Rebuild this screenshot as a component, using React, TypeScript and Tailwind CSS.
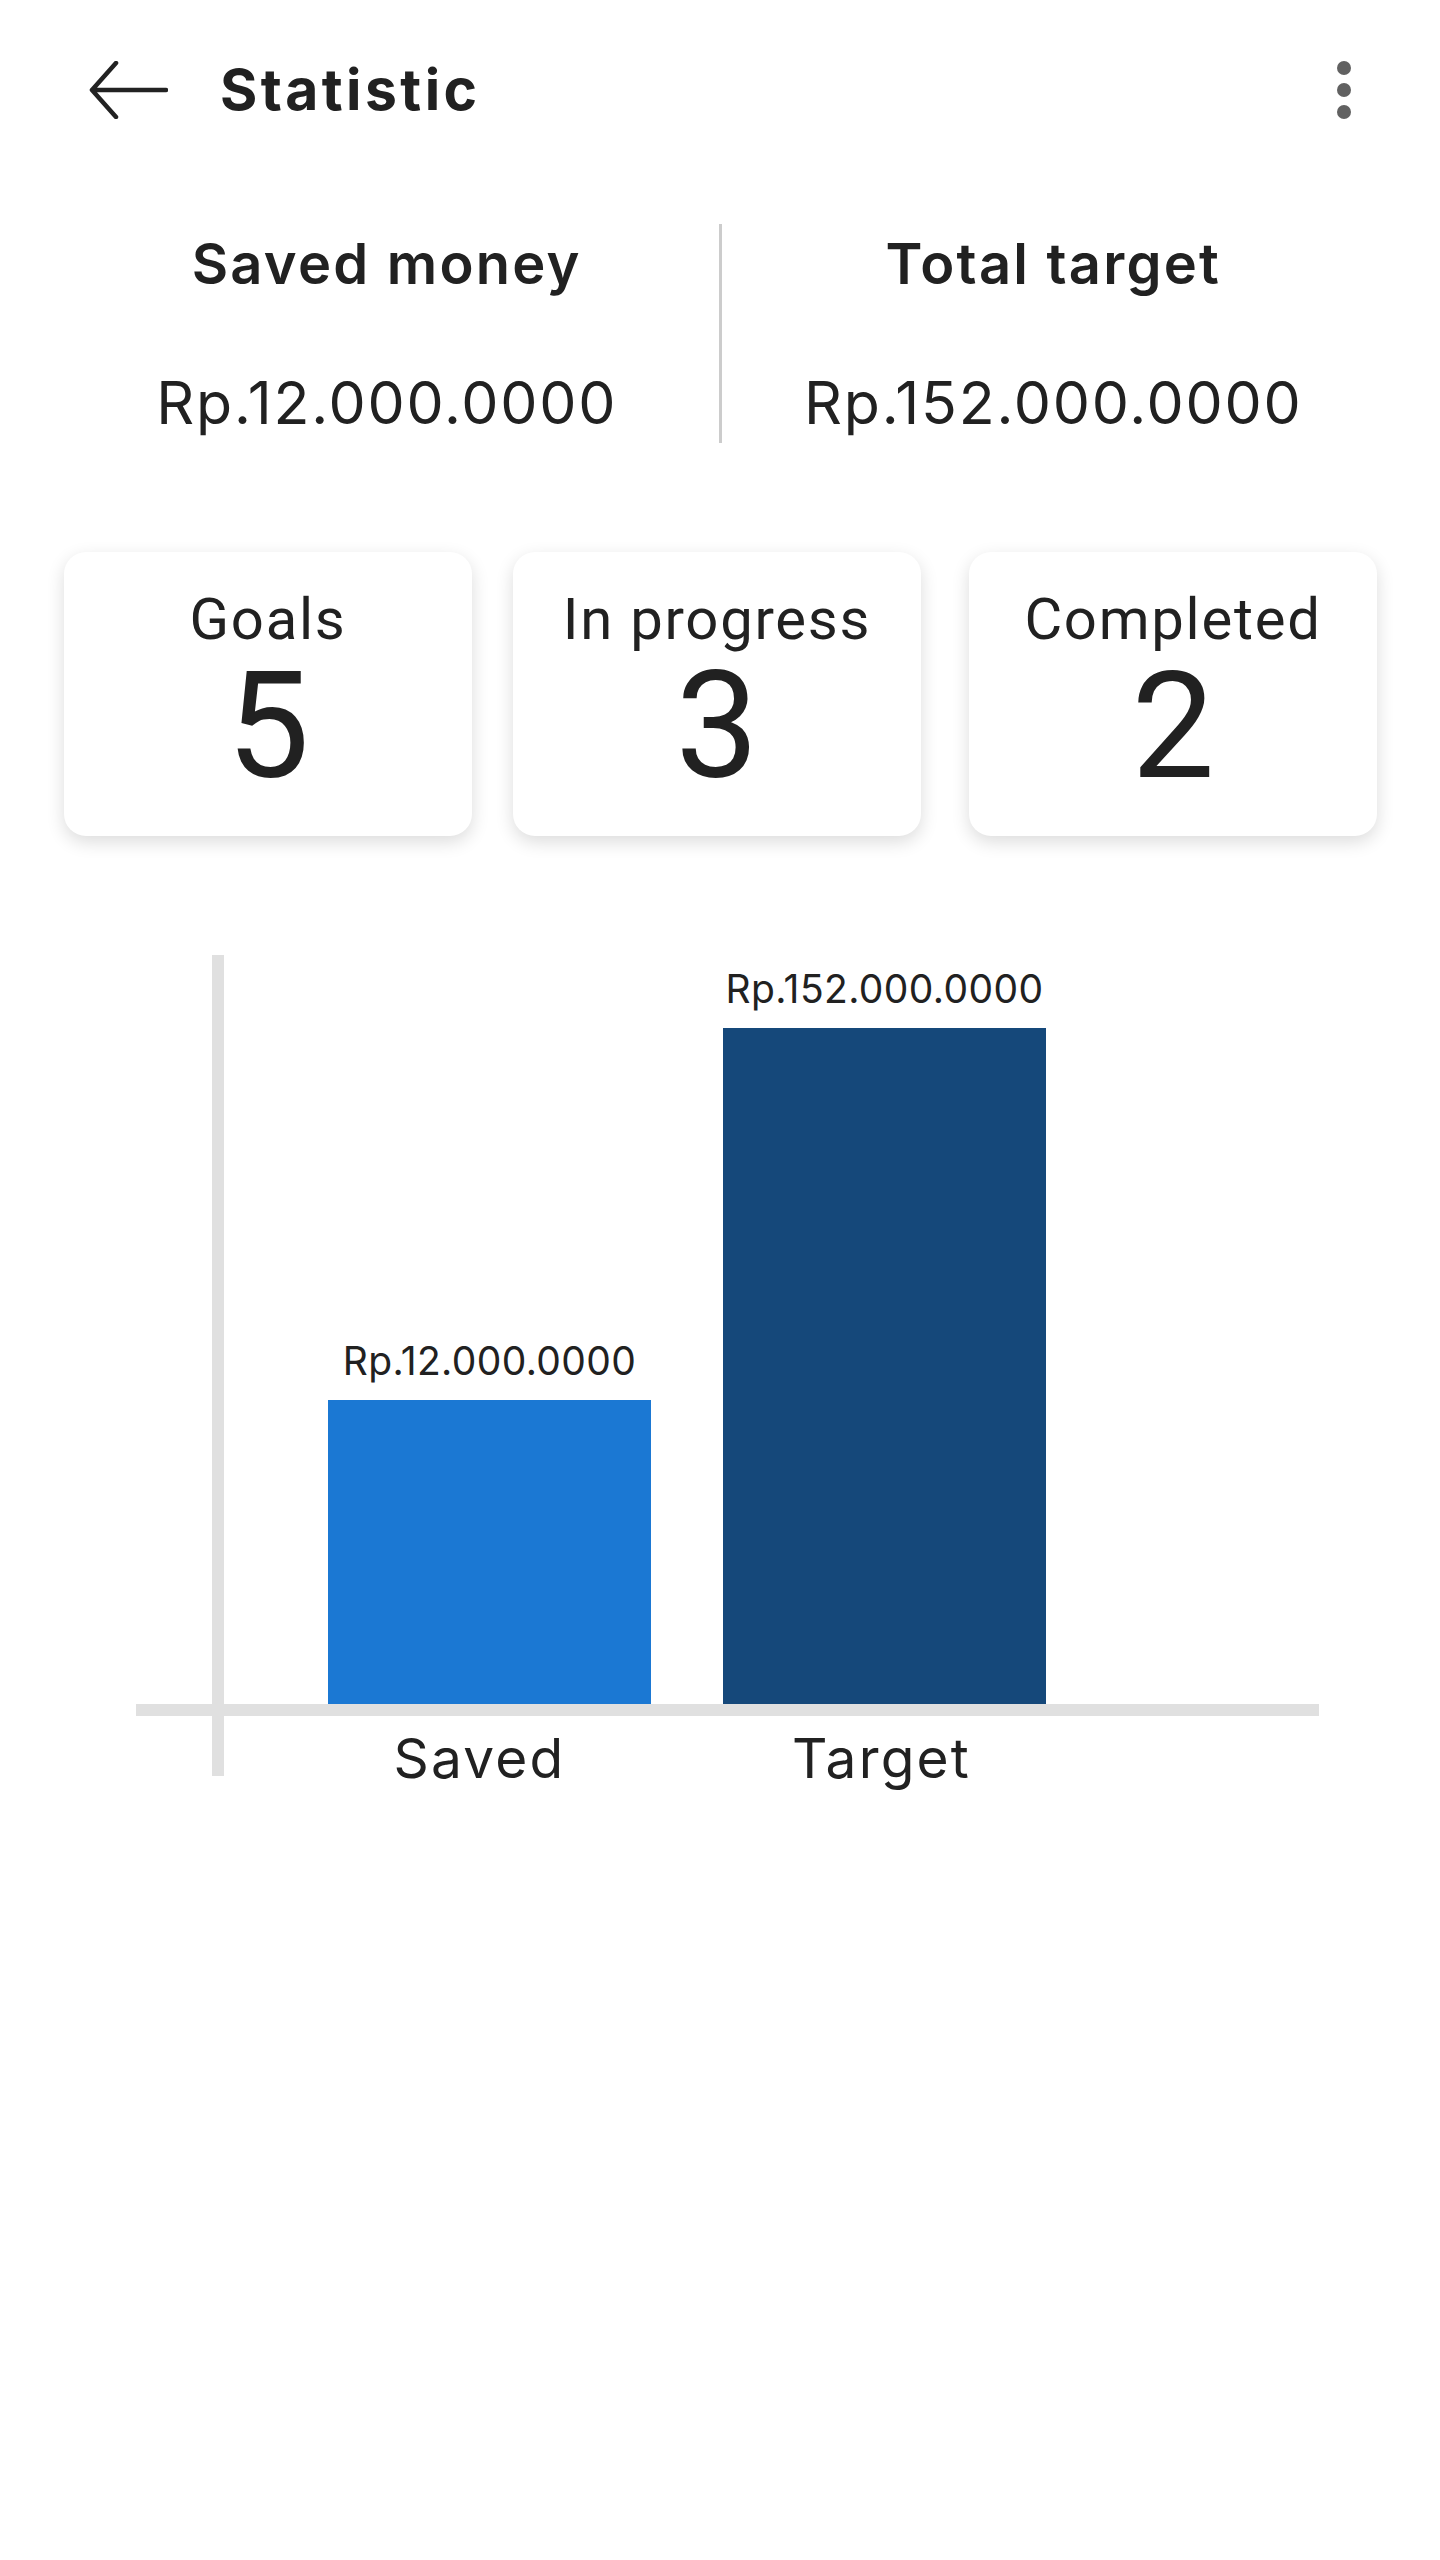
import React from 'react';

const poppins = { fontFamily: 'Inter, "Open Sans", sans-serif' };

const stats = [
  { label: 'Goals', value: 5, gap: 'ml-0' },
  { label: 'In progress', value: 3, gap: 'ml-[41px]' },
  { label: 'Completed', value: 2, gap: 'ml-[48px]' },
];

const bars = [
  { name: 'Saved', amount: 'Rp.12.000.0000', height: 304, color: 'bg-[#1b78d3]' },
  { name: 'Target', amount: 'Rp.152.000.0000', height: 676, color: 'bg-[#15487a]' },
];

const BackArrow = () => (
  <svg width="80" height="58" viewBox="0 0 80 58" fill="none">
    <path d="M78 29H4M4 29L28 2M4 29L28 56" stroke="#222" strokeWidth="4.5" strokeLinecap="round" strokeLinejoin="round" />
  </svg>
);

const App: React.FC = () => {
  return (
    <div className="w-[1440px] min-h-[2560px] bg-white text-[#212121] font-['Inter',sans-serif]">
      {/* Header */}
      <div className="h-[180px] flex items-center pl-[88px] pr-[89px]">
        <BackArrow />
        <h1 className="ml-[52px] text-[57px] font-bold tracking-[0.06em] flex-1">Statistic</h1>
        <div className="flex flex-col gap-[8px]">
          <span className="w-[14px] h-[14px] rounded-full bg-[#616161]" />
          <span className="w-[14px] h-[14px] rounded-full bg-[#616161]" />
          <span className="w-[14px] h-[14px] rounded-full bg-[#616161]" />
        </div>
      </div>

      {/* Summary */}
      <div className="mt-[44px] flex px-[55px] h-[219px]">
        <div className="flex-1 flex flex-col items-center pt-[8px]">
          <p className="text-[56px] font-semibold leading-[64px] tracking-[0.04em]">Saved money</p>
          <p className="mt-[74px] text-[59px] leading-[66px] tracking-[0.03em]">Rp.12.000.0000</p>
        </div>
        <div className="w-[3px] bg-[#cccccc]" />
        <div className="flex-1 flex flex-col items-center pt-[8px]">
          <p className="text-[56px] font-semibold leading-[64px] tracking-[0.04em]">Total target</p>
          <p className="mt-[74px] text-[59px] leading-[66px] tracking-[0.03em]">Rp.152.000.0000</p>
        </div>
      </div>

      {/* Stat cards */}
      <div className="mt-[109px] flex pl-[64px]">
        {stats.map((s) => (
          <div
            key={s.label}
            className={`${s.gap} w-[408px] h-[284px] rounded-[22px] bg-white shadow-[0_6px_18px_rgba(0,0,0,0.14)] flex flex-col items-center pt-[34px] font-['Roboto',sans-serif]`}
          >
            <p className="text-[58px] leading-[66px] tracking-[0.03em]">{s.label}</p>
            <p className="text-[148px] leading-[150px]">{s.value}</p>
          </div>
        ))}
      </div>

      {/* Chart */}
      <div className="mt-[119px] ml-[136px] w-[1183px] h-[821px] relative">
        <div className="absolute left-[76px] top-0 bottom-0 w-[12px] bg-[#e0e0e0]" />
        <div className="h-[749px] flex items-end pl-[192px] gap-[72px]">
          {bars.map((b) => (
            <div key={b.name} className="w-[323px] flex flex-col items-center">
              <p className="text-[39px] leading-[46px] mb-[16px] tracking-[0.01em]" style={poppins}>{b.amount}</p>
              <div className={`w-full ${b.color}`} style={{ height: b.height }} />
            </div>
          ))}
        </div>
        <div className="h-[12px] bg-[#e0e0e0]" />
        <div className="flex pl-[192px] gap-[72px] pt-[10px]">
          {bars.map((b, i) => (
            <p
              key={b.name}
              className={`w-[323px] text-center text-[55px] leading-[64px] tracking-[0.04em] ${i === 0 ? 'pr-[20px]' : 'pr-[6px]'}`}
            >
              {b.name}
            </p>
          ))}
        </div>
      </div>
    </div>
  );
};

export default App;
